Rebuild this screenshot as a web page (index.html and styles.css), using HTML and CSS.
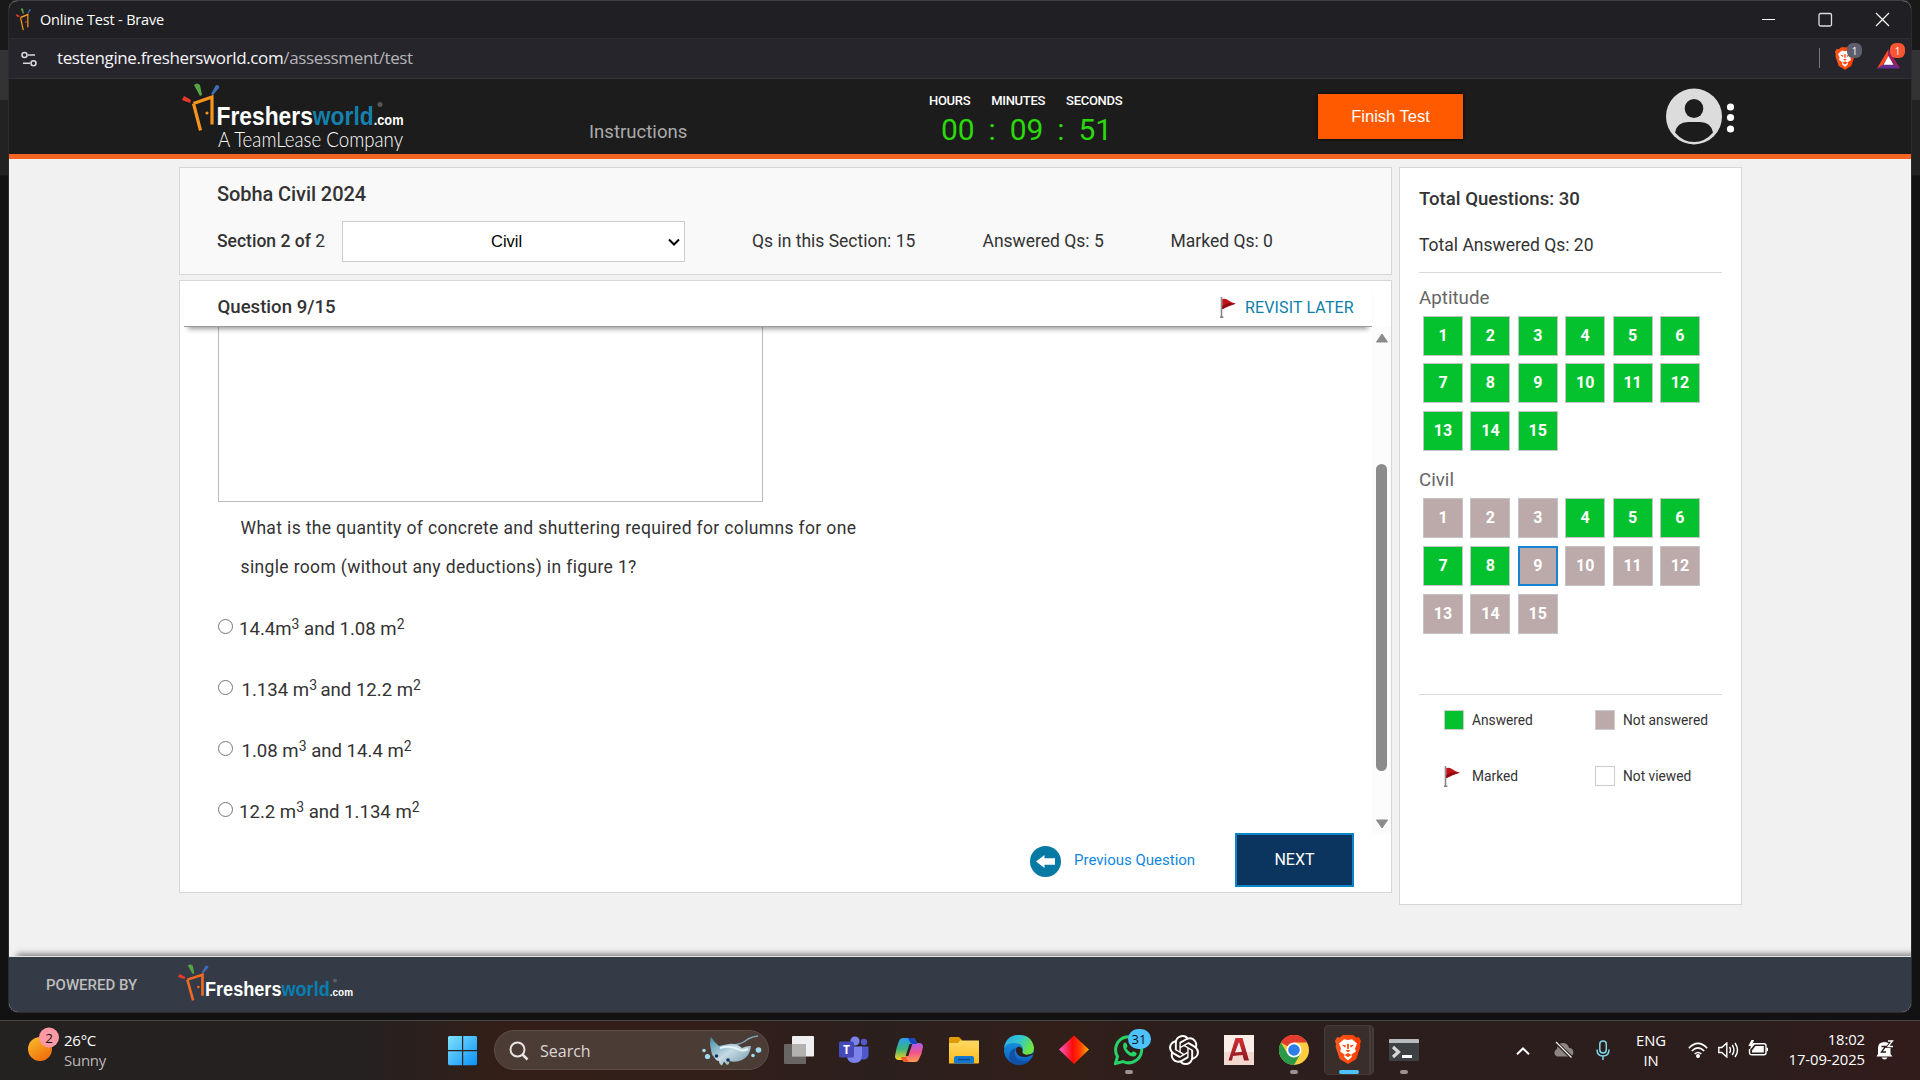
FILE: index.html
```html
<!DOCTYPE html>
<html lang="en">
<head>
<meta charset="utf-8">
<title>Online Test - Brave</title>
<link rel="stylesheet" href="styles.css">
</head>
<body>
<svg class="defs" width="0" height="0" aria-hidden="true">
  <defs>
    <linearGradient id="gBrave" x1="0" y1="0" x2="1" y2="0"><stop offset="0" stop-color="#ff5a1f"/><stop offset="1" stop-color="#ff3a00"/></linearGradient>
    <linearGradient id="gSun" x1="0" y1="0" x2=".7" y2="1"><stop offset="0" stop-color="#fbc02d"/><stop offset="1" stop-color="#ef6c0c"/></linearGradient>
    <linearGradient id="gWin" x1="0" y1="0" x2="1" y2="1"><stop offset="0" stop-color="#7fe3ff"/><stop offset="1" stop-color="#0a90f5"/></linearGradient>
    <linearGradient id="gRay" x1="0" y1="0" x2="1" y2="1"><stop offset="0" stop-color="#3f8aa8"/><stop offset=".5" stop-color="#c5dbe4"/><stop offset="1" stop-color="#6d93a8"/></linearGradient>
    <linearGradient id="gCopA" x1="0" y1="0" x2="0" y2="1"><stop offset="0" stop-color="#2a9df4"/><stop offset=".5" stop-color="#39b57c"/><stop offset="1" stop-color="#ffd21c"/></linearGradient>
    <linearGradient id="gCopB" x1="0" y1="0" x2="0" y2="1"><stop offset="0" stop-color="#a95df0"/><stop offset=".5" stop-color="#f0548e"/><stop offset="1" stop-color="#ff9d4d"/></linearGradient>
    <linearGradient id="gFold" x1="0" y1="0" x2="0" y2="1"><stop offset="0" stop-color="#ffd964"/><stop offset="1" stop-color="#fbbc1c"/></linearGradient>
    <linearGradient id="gEdgeA" x1="0" y1="0" x2="1" y2=".4"><stop offset="0" stop-color="#2aa8e8"/><stop offset=".55" stop-color="#35c6cf"/><stop offset="1" stop-color="#6ee63f"/></linearGradient>
    <linearGradient id="gEdgeB" x1="0" y1="0" x2="0" y2="1"><stop offset="0" stop-color="#1b9de2"/><stop offset="1" stop-color="#0b5cc0"/></linearGradient>
    <linearGradient id="gDia" x1="0" y1="0" x2="1" y2="0"><stop offset="0" stop-color="#ff5fd0"/><stop offset=".45" stop-color="#ff0a0a"/><stop offset=".7" stop-color="#ff3b00"/><stop offset="1" stop-color="#ffb400"/></linearGradient>
    <linearGradient id="gCad" x1="0" y1="0" x2="0" y2="1"><stop offset="0" stop-color="#d32f35"/><stop offset="1" stop-color="#8f1a22"/></linearGradient>
    <symbol id="door" viewBox="0 0 38 60" preserveAspectRatio="none">
      <path d="M0 17l2-4 7 4-1 3z" fill="#e8392b"/>
      <path d="M12 2q3-3 6 0l2 10-2 1z" fill="#55a546"/>
      <path d="M34 2q4 0 3 3l-6 7-2-1z" fill="#3f6db5"/>
      <path d="M11.500 20.500L30 14L30 41.500M11.500 20.500L18.500 47.500" fill="none" stroke="currentColor" stroke-width="3.200"/>
      <circle cx="25" cy="30" r="1.600" fill="currentColor"/>
    </symbol>
    <symbol id="flag" viewBox="0 0 17 21">
      <path d="M1.500 0v20" stroke="#8a8a8a" stroke-width="1.600"/><path d="M0 20.200h3.400" stroke="#777" stroke-width="1.400"/>
      <path d="M2.300 2q4-1 6 1.200q3 2 7.500 3.500q-4 1-7 2.500l-6.500 3z" fill="#c2121c"/><path d="M2.300 9l6-3 7 .8-7 2.300-6 3z" fill="#8d0b12"/>
    </symbol>
    <symbol id="lion" viewBox="0 0 26 29">
      <path d="M8 0h10l3 2.500 3-.3L26 6l-1 3 .3 3-4 12-8.300 5L4.700 24l-4-12L1 9 0 6l2-3.800 3 .3z" fill="url(#gBrave)"/>
      <path d="M13 5l4-.8 5 4.300-2 5 .8 3-4.300 3 .3 2.500L13 25.500 9.200 22l.3-2.500-4.300-3 .8-3-2-5 5-4.300z" fill="#fff"/>
      <path d="M6.500 9.500l4.500 1-.8 2.200zM19.500 9.500l-4.500 1 .8 2.200zM12 9h2l-.2 5h-1.600zM10.500 15h5L13 17.500zM9.500 20l3.500-2 3.500 2-3.500 2.200z" fill="#ff4a10"/>
    </symbol>
  </defs>
</svg>

<div class="window">
  <div class="titlebar">
    <svg class="favicon" width="15" height="28" viewBox="0 0 38 60" preserveAspectRatio="none"><use href="#door" width="38" height="60"/></svg>
    <span class="win-title">Online Test - Brave</span>
    <svg class="win-ctl" width="128" height="18" viewBox="0 0 128 18" fill="none" stroke="#fff">
      <path d="M0 9.500h13"/><rect x="57" y="3.500" width="12.500" height="12.500" rx="1.500" stroke="#ddd" stroke-width="1.300"/><path d="M114 3l13 13M127 3l-13 13" stroke-width="1.200"/>
    </svg>
  </div>
  <div class="urlbar">
    <svg width="16" height="16" viewBox="0 0 16 16" fill="none" stroke="#d8d8dc" stroke-width="1.600"><circle cx="3.500" cy="4" r="2.500"/><path d="M7 4h7M2 12.200h7"/><circle cx="12.500" cy="12.200" r="2.500"/></svg>
    <span class="url"><b>testengine.freshersworld.com</b>/assessment/test</span>
    <span class="url-sep"></span>
    <span class="ext ext-shield"><svg width="20" height="23"><use href="#lion" width="20" height="23"/></svg><i class="badge grey">1</i></span>
    <span class="ext ext-bat"><svg width="23" height="20" viewBox="0 0 23 20"><path d="M11.500 0v8L5 17l-5 2.500z" fill="#ff4724"/><path d="M11.500 0v8L18 17l5 2.500z" fill="#9e1f63"/><path d="M0 19.500L7 15h9l7 4.500z" fill="#662d91"/><path d="M11.500 7l5 8.700h-10z" fill="#fff"/></svg><i class="badge red">1</i></span>
  </div>

  <header class="site-head">
    <svg class="logo" width="230" height="72" viewBox="0 0 230 72">
      <use href="#door" x="0" y="1" width="38" height="60" color="#f7941d"/>
      <text x="34.500" y="43" font-family="Liberation Sans, sans-serif" font-weight="bold" font-size="25" fill="#fff" textLength="187" lengthAdjust="spacingAndGlyphs">Freshers<tspan fill="#1680ad">world</tspan><tspan font-size="14">.com</tspan></text>
      <circle cx="198" cy="22.500" r="2.500" fill="#555"/>
      <text x="36" y="65" font-family="Lato, sans-serif" font-weight="300" font-size="21.500" fill="#fff" textLength="185" lengthAdjust="spacingAndGlyphs">A TeamLease Company</text>
    </svg>
    <a class="instructions">Instructions</a>
    <div class="timer">
      <div class="timer-labels"><span>HOURS</span><span>MINUTES</span><span>SECONDS</span></div>
      <div class="timer-digits"><span>00</span><span>:</span><span>09</span><span>:</span><span>51</span></div>
    </div>
    <div class="finish"><span>Finish Test</span></div>
    <svg class="avatar" width="70" height="57" viewBox="0 0 70 57">
      <circle cx="28" cy="28.500" r="28" fill="#dcdcdc"/><ellipse cx="28" cy="20.500" rx="9.300" ry="9.500" fill="#1c1c1c"/>
      <path d="M9 44.500Q11 34 22 34h12q11 0 13 10.500Q39 54 28 54T9 44.500z" fill="#1c1c1c"/>
      <g fill="#fff"><circle cx="64.500" cy="19" r="3.600"/><circle cx="64.500" cy="29.500" r="3.600"/><circle cx="64.500" cy="41" r="3.600"/></g>
    </svg>
  </header>

  <main class="page">
    <div class="left">
      <section class="card summary">
        <h1>Sobha Civil 2024</h1>
        <div class="summary-row">
          <span class="sec"><b>Section 2 of</b> 2</span>
          <div class="select"><span>Civil</span><svg width="12" height="8" viewBox="0 0 12 8"><path d="M1 1.500l5 5 5-5" fill="none" stroke="#000" stroke-width="2"/></svg></div>
          <span class="st1">Qs in this Section: 15</span>
          <span class="st2">Answered Qs: 5</span>
          <span class="st3">Marked Qs: 0</span>
        </div>
      </section>
      <section class="card question">
        <div class="q-head">
          <h2>Question 9/15</h2>
          <svg class="q-flag" width="17" height="21"><use href="#flag" width="17" height="21"/></svg>
          <a>REVISIT LATER</a>
        </div>
        <div class="q-scroll">
          <div class="q-body">
            <div class="figure"></div>
            <p>What is the quantity of concrete and shuttering required for columns for one<br>single room (without any deductions) in figure 1?</p>
            <ul class="options">
              <li><i class="radio"></i><span class="o1">14.4m<sup>3</sup> and 1.08 m<sup>2</sup></span></li>
              <li><i class="radio"></i><span class="o2">1.134 m<sup>3 </sup>and 12.2 m<sup>2</sup></span></li>
              <li><i class="radio"></i><span class="o2">1.08 m<sup>3</sup> and 14.4 m<sup>2</sup></span></li>
              <li><i class="radio"></i><span class="o1">12.2 m<sup>3</sup> and 1.134 m<sup>2</sup></span></li>
            </ul>
          </div>
          <div class="scrollbar">
            <svg width="14" height="10" viewBox="0 0 14 10"><path d="M7 1L12.500 9h-11z" fill="#8b8b8b" stroke="#8b8b8b" stroke-linejoin="round"/></svg>
            <span class="thumb"></span>
            <svg width="14" height="10" viewBox="0 0 14 10"><path d="M7 9L12.500 1h-11z" fill="#8b8b8b" stroke="#8b8b8b" stroke-linejoin="round"/></svg>
          </div>
        </div>
        <div class="q-nav">
          <svg class="back" width="31" height="31" viewBox="0 0 31 31"><circle cx="15.500" cy="15.500" r="15.500" fill="#0679a4"/><path d="M6 15.500L14.500 9v3.200H25v6.600H14.500v3.200z" fill="#fff"/></svg>
          <a class="prev">Previous Question</a>
          <div class="next"><span>NEXT</span></div>
        </div>
      </section>
    </div>

    <aside class="card panel">
      <h3>Total Questions: 30</h3>
      <div class="answered">Total Answered Qs: 20</div>
      <h4 class="apt">Aptitude</h4>
      <div class="cells"><span>1</span><span>2</span><span>3</span><span>4</span><span>5</span><span>6</span><span>7</span><span>8</span><span>9</span><span>10</span><span>11</span><span>12</span><span>13</span><span>14</span><span>15</span></div>
      <h4 class="civ">Civil</h4>
      <div class="cells civil"><span class="na">1</span><span class="na">2</span><span class="na">3</span><span>4</span><span>5</span><span>6</span><span>7</span><span>8</span><span class="na current">9</span><span class="na">10</span><span class="na">11</span><span class="na">12</span><span class="na">13</span><span class="na">14</span><span class="na">15</span></div>
      <div class="legend">
        <div><i class="sw green"></i><span>Answered</span></div>
        <div><i class="sw taupe"></i><span>Not answered</span></div>
        <div><svg width="20" height="21"><use href="#flag" width="17" height="21"/></svg><span>Marked</span></div>
        <div><i class="sw"></i><span>Not viewed</span></div>
      </div>
    </aside>
  </main>

  <footer class="site-foot">
    <span>POWERED BY</span>
    <svg width="184" height="48" viewBox="0 0 184 48">
      <use href="#door" x="0" y="0" width="31" height="46" color="#f26a21"/>
      <text x="27" y="32" font-family="Liberation Sans, sans-serif" font-weight="bold" font-size="20" fill="#fff" textLength="148" lengthAdjust="spacingAndGlyphs">Freshers<tspan fill="#067fb0">world</tspan><tspan font-size="11">.com</tspan></text>
      <circle cx="157" cy="16.500" r="2" fill="#59606b"/>
    </svg>
  </footer>
</div>

<div class="taskbar">
  <div class="weather">
    <svg width="32" height="34" viewBox="0 0 32 34"><circle cx="12" cy="22" r="12" fill="url(#gSun)"/><circle cx="21" cy="10.500" r="10" fill="#ff9aa5"/><text x="21" y="15.500" text-anchor="middle" font-family="Open Sans, sans-serif" font-size="13.500" fill="#111">2</text></svg>
    <div><span>26°C</span><span class="dim">Sunny</span></div>
  </div>
  <svg class="start" width="30" height="30" viewBox="0 0 30 30" fill="url(#gWin)"><path d="M1 0h13v14H0V1zM15.200 0H28l1 1v13H15.200zM0 15.200h14v14H1l-1-1zM15.200 15.200H29v13l-1 1H15.200z"/></svg>
  <div class="search">
    <svg width="20" height="20" viewBox="0 0 20 20" fill="none" stroke="#e8e4e2" stroke-width="2"><circle cx="8.500" cy="8.500" r="7"/><path d="M13.500 13.500l5 5" stroke-width="2.500"/></svg>
    <span>Search</span>
    <svg class="ray" width="60" height="32" viewBox="0 0 60 32">
      <path d="M32 10Q40 9 46 4Q51 1.200 56 1" fill="none" stroke="#7fa7b8" stroke-width="1.600"/>
      <path d="M9 2Q7 9 9 14Q9 19 12 22Q14 26 17 26Q17 29 20 30.500L22 26.500L25 30Q28 29 27 26Q34 28 40 25Q48 21 49 11Q44 11 40 13Q34 8 27 9Q21 10 17 11Q12 7 9 2z" fill="url(#gRay)"/>
      <path d="M18 13Q28 10 36 14Q40 17 46 14" stroke="#e6f3f7" fill="none" stroke-width="2"/><circle cx="14.500" cy="21" r="1.800" fill="#16325c"/><circle cx="26" cy="25" r="1.800" fill="#16325c"/>
      <g fill="#9fdcf0"><circle cx="2" cy="15.500" r="1.800"/><circle cx="5.500" cy="21.500" r="2.600"/><circle cx="51" cy="20.500" r="1.800"/><circle cx="56.500" cy="15" r="2.800"/></g>
    </svg>
  </div>
  <div class="apps">
    <div><svg width="30" height="30" viewBox="0 0 30 30"><rect x="8" y="1" width="22" height="20.500" rx="1" fill="#efefef"/><rect y="9" width="22" height="20" rx="1" fill="#777" opacity=".8"/><rect x="8" y="9" width="14" height="12.500" fill="#b4b2b0"/></svg></div>
    <div><svg width="30" height="30" viewBox="0 0 30 30"><circle cx="16" cy="6" r="4.600" fill="#7b83eb"/><circle cx="25" cy="7" r="3.200" fill="#5059c9"/><path d="M20 11.500h9.500v8q0 5-5 5H20z" fill="#5059c9"/><path d="M8 11.500h15V20q0 8-7.500 8T8 20z" fill="#7b83eb"/><rect y="6.500" width="15" height="16" rx="1.500" fill="#454ab8"/><text x="7.500" y="19" text-anchor="middle" font-family="Open Sans, sans-serif" font-size="12" font-weight="bold" fill="#fff">T</text></svg></div>
    <div><svg width="30" height="30" viewBox="0 0 30 30"><path d="M9 3h9q3 0 4 3l1 3h-6L12 22q-1 3-4 3H5q-4 0-4-4Q2 13 5 6q1-3 4-3z" fill="url(#gCopA)"/><path d="M21 27h-9q-3 0-4-3l-1-2h5L17.500 9q1-1 4-1H25q4 0 4 4Q28 19 25 24q-1 3-4 3z" fill="url(#gCopB)"/><path d="M14 3h4q3 0 4 3l1 3h-4q-2 0-3-2z" fill="#1746c4"/><path d="M7 22h5q1 3 3 5h-3q-3 0-4-2z" fill="#f4572e"/><path d="M15.500 9h2.800l-4 12h-2.600z" fill="#2c1e1b"/></svg></div>
    <div><svg width="30" height="30" viewBox="0 0 30 30"><path d="M1 2h9l3 3v4H0V3z" fill="#e09c07"/><path d="M11 5.500h19v22q0 1-1 1H0V8h9z" fill="url(#gFold)"/><path d="M5 28.500V23q0-2 2-2h16q2 0 2 2v5.500z" fill="#1579cf"/><path d="M9 24.500h12" stroke="#0a4c8f" stroke-width="1.500"/></svg></div>
    <div><svg width="30" height="30" viewBox="0 0 30 30"><circle cx="15" cy="15" r="15" fill="url(#gEdgeB)"/><path d="M0 13Q2 0 15 0Q28 0 30 13Q30 20 22 20Q17 19 19 15Q19 8 10 8Q3 8 0 13z" fill="url(#gEdgeA)"/><path d="M12 13q-4 7 3 12 6 3 12-1-4 6-12 6-9-1-10-8 1-8 7-9z" fill="#1150a4"/><path d="M15 11.500q-4 1-3 5 2 6 10 5.500 4-.5 8-3v-1q-5 2.500-9 1.500-3.500-1-2.500-4 0-3-3.500-4z" fill="#2c1f1c"/></svg></div>
    <div><svg width="30" height="30" viewBox="0 0 30 30"><path d="M15 .5L30 14.500 15 29 0 14.500z" fill="url(#gDia)"/></svg></div>
    <div class="run"><svg width="30" height="30" viewBox="0 0 30 30"><path d="M1.500 28.500l2-7A13 13 0 1 1 9 26.500z" fill="none" stroke="#25d366" stroke-width="3"/><path d="M9.500 8.500q2-2 3 0l1 2.500q0 1-1.200 2.200 2 3.500 5 4.800l1.700-1.800q1 0 3.500 1.600.5 3-2.500 3.700-4 .5-8-4t-2.500-9z" fill="#25d366"/></svg><b class="count">31</b></div>
    <div><svg width="30" height="30" viewBox="0 0 24 24" fill="#fff"><path d="M22.2819 9.8211a5.9847 5.9847 0 0 0-.5157-4.9108 6.0462 6.0462 0 0 0-6.5098-2.9A6.0651 6.0651 0 0 0 4.9807 4.1818a5.9847 5.9847 0 0 0-3.9977 2.9 6.0462 6.0462 0 0 0 .7427 7.0966 5.98 5.98 0 0 0 .511 4.9107 6.051 6.051 0 0 0 6.5146 2.9001A5.9847 5.9847 0 0 0 13.2599 24a6.0557 6.0557 0 0 0 5.7718-4.2058 5.9894 5.9894 0 0 0 3.9977-2.9001 6.0557 6.0557 0 0 0-.7475-7.0729zm-9.022 12.6081a4.4755 4.4755 0 0 1-2.8764-1.0408l.1419-.0804 4.7783-2.7582a.7948.7948 0 0 0 .3927-.6813v-6.7369l2.02 1.1686a.071.071 0 0 1 .038.052v5.5826a4.504 4.504 0 0 1-4.4945 4.4944zm-9.6607-4.1254a4.4708 4.4708 0 0 1-.5346-3.0137l.142.0852 4.783 2.7582a.7712.7712 0 0 0 .7806 0l5.8428-3.3685v2.3324a.0804.0804 0 0 1-.0332.0615L9.74 19.9502a4.4992 4.4992 0 0 1-6.1408-1.6464zM2.3408 7.8956a4.485 4.485 0 0 1 2.3655-1.9728V11.6a.7664.7664 0 0 0 .3879.6765l5.8144 3.3543-2.0201 1.1685a.0757.0757 0 0 1-.071 0l-4.8303-2.7865A4.504 4.504 0 0 1 2.3408 7.872zm16.5963 3.8558L13.1038 8.364 15.1192 7.2a.0757.0757 0 0 1 .071 0l4.8303 2.7913a4.4944 4.4944 0 0 1-.6765 8.1042v-5.6772a.79.79 0 0 0-.407-.667zm2.0107-3.0231l-.142-.0852-4.7735-2.7818a.7759.7759 0 0 0-.7854 0L9.409 9.2297V6.8974a.0662.0662 0 0 1 .0284-.0615l4.8303-2.7866a4.4992 4.4992 0 0 1 6.6802 4.66zM8.3065 12.863l-2.02-1.1638a.0804.0804 0 0 1-.038-.0567V6.0742a4.4992 4.4992 0 0 1 7.3757-3.4537l-.142.0805L8.704 5.459a.7948.7948 0 0 0-.3927.6813zm1.0976-2.3654l2.602-1.4998 2.6069 1.4998v2.9994l-2.5974 1.4997-2.6067-1.4997Z"/></svg></div>
    <div><svg width="30" height="30" viewBox="0 0 30 30"><rect width="30" height="30" fill="#fbeee9"/><path d="M0 17h30v13H0z" fill="#f3d8cf"/><path d="M11.500 3h7L25 25.500h-5L18.500 20l-9.500 1-1 4.500H4.500zM15 7l-4 10.500 7-.8z" fill="url(#gCad)" fill-rule="evenodd"/></svg></div>
    <div class="run"><svg width="30" height="30" viewBox="0 0 30 30"><circle cx="15" cy="15" r="15" fill="#ffcd40"/><path d="M15 15L2 7.500A15 15 0 0 1 28 7.500H15z" fill="#e33b2e"/><path d="M2 7.500A15 15 0 0 0 15 30l6.500-11.200L15 15 8.500 18.700z" fill="#2a9a4a"/><circle cx="15" cy="15" r="7.500" fill="#fff"/><circle cx="15" cy="15" r="5.800" fill="#2f7de9"/></svg></div>
    <div class="active"><svg width="26" height="30"><use href="#lion" width="26" height="29"/></svg></div>
    <div class="run"><svg width="30" height="30" viewBox="0 0 30 30"><rect y="4" width="30" height="22" rx="1" fill="#3e4143"/><path d="M0 8V5q0-1 1-1h28q1 0 1 1v3z" fill="#b9bbbd"/><path d="M4 12l5.500 5L4 22" stroke="#d6d6d6" stroke-width="3.200" fill="none"/><path d="M13 21.500h10" stroke="#fff" stroke-width="3"/></svg></div>
  </div>
  <div class="tray">
    <svg width="14" height="8" viewBox="0 0 14 8"><path d="M1 7.200L7 1.500l6 5.700" fill="none" stroke="#fff" stroke-width="2"/></svg>
    <svg class="cloud" width="21" height="18" viewBox="0 0 21 18"><path d="M4 15.500a4 4 0 0 1 0-7.500 6 5.500 0 0 1 12-1 4.300 4.300 0 0 1 1 8.500z" fill="#8d8583"/><path d="M3 1.500l15.500 15" stroke="#2c1e1b" stroke-width="3.500"/><path d="M3 1l15.500 15.500" stroke="#eee" stroke-width="1.300"/></svg>
    <svg class="mic" width="14" height="21" viewBox="0 0 14 21" fill="none" stroke="#7fd6ea" stroke-width="1.500"><rect x="3.800" y="1" width="6.500" height="12" rx="3.200"/><path d="M1 9.500q0 6.500 6 6.500t6-6.500M7 16v4"/></svg>
    <div class="lang"><span>ENG</span><span>IN</span></div>
    <svg class="wifi" width="20" height="16" viewBox="0 0 20 16" fill="none" stroke="#fff" stroke-width="1.600"><path d="M.8 6.200Q10-3.500 19.200 6.200M3.800 9Q10 2.800 16.200 9M6.700 12Q10 9 13.300 12"/><circle cx="10" cy="14" r="1.200" fill="#fff"/></svg>
    <svg class="vol" width="21" height="16" viewBox="0 0 21 16" fill="none" stroke="#fff" stroke-width="1.400"><path d="M.8 5.500h3L8.800 1v14L3.800 10.500h-3zM11.500 5q2 3 0 6M14.200 3q3.500 5 0 10M17 1q5 7 0 14"/></svg>
    <svg class="batt" width="21" height="17" viewBox="0 0 21 17"><path d="M5 3.800h11q2 0 2 2v7q0 2-2 2H4q-2.500 0-2.500-2V9" fill="none" stroke="#fff" stroke-width="1.400"/><path d="M7.500 6h8.300v6.500H4V10.500z" fill="#fff"/><path d="M18.500 7.500l1.500.5v3l-1.500.5z" fill="#fff"/><path d="M3.500 0L.3 6h2.500L2 10 7 4H4.500L6 0z" fill="#fff"/></svg>
    <div class="clock"><span>18:02</span><span>17-09-2025</span></div>
    <svg class="bell" width="19" height="20" viewBox="0 0 19 20"><path d="M2 14V8q0-6 6.500-6 6 0 6 6v6l2 2.500H.5z" fill="#fff"/><path d="M5.500 17.500h6q-1 2-3 2t-3-2z" fill="#fff"/><path d="M5.500 6.500h4l-4 5.500h4.500" stroke="#2d1c1b" fill="none" stroke-width="1.400"/><path d="M12 1h4.500L12 6.500h5" stroke="#2d1c1b" stroke-width="3" fill="none"/><path d="M12 1h4.500L12 6.500h5" stroke="#fff" stroke-width="1.300" fill="none"/></svg>
  </div>
</div>
</body>
</html>
```
FILE: styles.css
```css
* { box-sizing: border-box; }
html, body { margin: 0; height: 1080px; overflow: hidden; }
body {
  font-family: Roboto, "Liberation Sans", sans-serif;
  color: #333;
  background: linear-gradient(#191919 0 50px, #333335 50px 100px, #222 100px 175px, #121212 176px);
}
h1, h2, h3, h4, p, ul { margin: 0; padding: 0; list-style: none; font-weight: 500; }
svg { display: block; flex: none; }
i { font-style: normal; }
.defs { position: absolute; }
b { font-weight: 500; }
span, a { white-space: nowrap; }

.window {
  margin: 0 9px 8px;
  height: 1012px;
  border-top: 1px solid #414144;
  border-radius: 9px;
  overflow: hidden;
  background: #f1f1f1;
  box-shadow: 0 0 0 1px #2c2c2e;
}
.titlebar { display: flex; height: 37px; background: #201f24; padding-left: 7px; }
.favicon { margin-top: 7px; color: #f7941d; }
.win-title { margin-left: 9px; font: 14.500px/38px "Open Sans", sans-serif; color: #fff; letter-spacing: -.18px; }
.win-ctl { margin: 9px 21px 0 auto; }
.urlbar { display: flex; height: 41px; background: #26252b; border-top: 1px solid #2d2c31; border-bottom: 1px solid #343338; padding-left: 12px; }
.urlbar > svg { margin-top: 12px; }
.url { margin-left: 20px; font: 17px/38px "Open Sans", sans-serif; color: #b4b4b8; letter-spacing: -.37px; }
.url b { font-weight: 400; color: #f4f4f6; }
.url-sep { width: 1px; height: 20px; background: #77767c; margin: 9px 15px 0 auto; }
.ext { position: relative; }
.ext-shield { margin: 8px 22px 0 0; }
.ext-bat { margin: 10px 11px 0 0; }
.badge { position: absolute; height: 15px; width: 15px; border-radius: 6px; color: #fff; font: 10px/16px "Open Sans", sans-serif; text-align: center; }
.badge.grey { left: 12px; top: -4px; background: #5d5f6e; }
.badge.red { left: 13px; top: -6px; background: #fb5531; }

.site-head { display: flex; height: 80px; background: #1c1c1c; border-bottom: 5px solid #f26522; padding-left: 173px; }
.logo { margin-top: 3px; }
.instructions { margin: 41px 0 0 177px; width: 98px; font-size: 18.600px; line-height: 24px; color: #aaa; }
.timer { margin: 12px 0 0 242px; width: 196px; }
.timer-labels { display: flex; gap: 21px; font-size: 13px; line-height: 20px; font-weight: 500; color: #fff; letter-spacing: -.3px; }
.timer-digits { display: flex; padding-left: 12px; font-size: 30px; line-height: 38px; color: #2bd90b; }
.timer-digits span:nth-child(even) { width: 35px; text-align: center; }
.finish { margin: 15px 0 0 193px; width: 145px; height: 45px; background: #ff5a00; box-shadow: 0 0 3px #000; color: #fff; text-align: center; font: 16.500px/44px "Liberation Sans", sans-serif; }
.avatar { margin: 9px 0 0 203px; }

.page { display: flex; gap: 7px; align-items: flex-start; height: 797px; padding: 8px 0 0 170px; }
.left { width: 1213px; }
.card { border: 1px solid #d6d6d6; background: #fff; }
.summary { height: 108px; background: #f9f9f9; padding: 13px 0 0 38px; }
h1 { margin-left: -1px; font-size: 20px; line-height: 26px; letter-spacing: -.08px; }
.summary-row { display: flex; margin-top: 14px; font-size: 17.500px; line-height: 40px; }
.sec { margin-left: -1px; width: 125px; }
.select { display: flex; align-items: center; width: 343px; height: 41px; border: 1px solid #ccc; background: #fff; color: #000; padding: 0 4px 0 148px; font: 16.500px/39px "Liberation Sans", sans-serif; justify-content: space-between; }
.st1 { margin-left: 67px; width: 230.500px; }
.st2 { width: 188px; }

.question { margin-top: 5px; height: 613px; }
.q-head { position: relative; display: flex; height: 46px; margin: 0 19px 0 4px; padding-left: 33.500px; border-bottom: 1px solid #9b9b9b; box-shadow: 0 6px 5px -4px rgba(0,0,0,.4); background: #fff; }
h2 { font-size: 18.600px; line-height: 52px; }
.q-flag { margin: 16px 8px 0 auto; }
.q-head a { width: 127px; font-size: 16px; line-height: 54px; color: #0c7fa9; letter-spacing: .14px; }
.q-scroll { display: flex; height: 507px; }
.q-body { flex: 1; padding-left: 38px; }
.figure { width: 545px; height: 175px; border: 1px solid #bbb; border-top: 0; }
.q-body p { padding: 7px 0 0 22.500px; font-size: 17.500px; line-height: 39px; font-weight: 400; letter-spacing: .355px; }
.options { margin-top: 11px; font-size: 18.600px; font-weight: 400; }
.options li { display: flex; height: 61px; line-height: 62px; }
.radio { width: 15px; height: 15px; margin-top: 21px; border: 1px solid #767676; border-radius: 50%; }
.o1 { margin-left: 6px; }
.o2 { margin-left: 8.500px; }
sup { font-size: 13.950px; line-height: 0; vertical-align: 6px; }
.scrollbar { width: 19px; background: #fcfcfc; display: flex; flex-direction: column; align-items: center; padding: 6px 0 5px; }
.thumb { width: 11px; height: 307px; margin: 121px 0 auto; border-radius: 6px; background: #8b8b8b; }
.q-nav { display: flex; padding-left: 850px; height: 57px; }
.back { margin-top: 12px; }
.prev { margin-left: 13px; width: 161px; font-size: 15px; line-height: 53px; color: #1187df; }
.next { width: 119px; height: 54px; margin-top: -1px; border: 2px solid #0d83c9; background: #0b355e; color: #fff; font-size: 16px; line-height: 50px; text-align: center; }

.panel { width: 343px; height: 738px; padding: 0 19px; }
h3 { margin-top: 18px; font-size: 18.600px; line-height: 26px; }
.answered { margin-top: 20px; height: 41px; font-size: 17.500px; line-height: 26px; border-bottom: 1px solid #d9d9d9; }
h4 { font-size: 18.750px; line-height: 26px; font-weight: 400; color: #666; }
.apt { margin-top: 12px; }
.cells { display: grid; grid-template-columns: repeat(6, 40px); gap: 7.400px; margin: 5px 0 0 4px; }
.cells span { height: 40px; border: 1px solid #c4c4c4; background: #04c22e; color: #fff; font-size: 16px; font-weight: 700; line-height: 37px; text-align: center; }
.cells .na { background: #bbaaa9; }
.cells .current { border: 2px solid #1583d8; line-height: 36px; }
.civil { row-gap: 8px; }
.civ { margin-top: 16.200px; }
.legend { display: grid; grid-template-columns: 151px 1fr; grid-auto-rows: 21px; row-gap: 35px; margin-top: 60px; padding: 15px 0 0 25px; border-top: 1px solid #d9d9d9; font-size: 13.750px; line-height: 21px; }
.legend div { display: flex; gap: 8px; }
.sw { width: 20px; height: 20px; border: 1px solid #ccc; }
.green { background: #04c22e; }
.taupe { background: #bbaaa9; }

.site-foot { position: relative; display: flex; height: 56px; border-top: 1px solid #e4e4e4; background: #353b46; padding: 7px 0 0 37px; color: #bdbdbd; font-size: 15px; font-weight: 500; line-height: 42px; box-shadow: 8px -2px 6px rgba(0,0,0,.5); }
.site-foot svg { margin-left: 41px; }

.taskbar { position: relative; display: flex; height: 60px; border-top: 1px solid #4b4543; background: linear-gradient(90deg, #242221 0, #252120 370px, #331f18 500px, #321f19 720px, #2b1f1d 880px, #321f19 1060px, #2b1e1c 1180px, #2b1e1c 1750px, #321b1b 1910px); font-family: "Open Sans", sans-serif; color: #fff; }
.weather { display: flex; width: 448px; padding: 6px 0 0 28px; font-size: 15px; letter-spacing: -.25px; }
.weather div { display: flex; flex-direction: column; margin: 3px 0 0 4px; line-height: 20px; }
.dim { color: #bcb8b7; }
.start { margin-top: 15px; }
.search { display: flex; margin: 9px 0 0 16px; width: 275px; height: 40px; border-radius: 20px; background: #4c3c36; border: 1px solid #5d4e49; padding-left: 14px; }
.search > svg { margin-top: 10px; }
.search span { margin-left: 11px; font-size: 16px; line-height: 40px; color: #ddd6d3; }
.search .ray { margin: 4px 6px 0 auto; }
.apps { display: flex; margin-left: 2px; }
.apps div { position: relative; width: 50px; height: 50px; margin: 4px 2.500px 0; padding-top: 10px; display: flex; justify-content: center; align-items: flex-start; }
.apps .run::after { content: ""; position: absolute; left: 21px; top: 45px; width: 8px; height: 4px; border-radius: 2px; background: #9b9291; }
.apps .active { background: #3a2e2b; border: 1px solid #483c39; border-radius: 5px; border-right: 5px double #483c39; padding-left: 3px; padding-top: 9px; }
.apps .active::after { content: ""; position: absolute; left: 14px; top: 44px; width: 20px; height: 4px; border-radius: 2px; background: #4cc2ff; }
.count { position: absolute; left: 24px; top: 4px; width: 23px; height: 20px; border-radius: 10px; background: #4cc2ff; color: #111; font-size: 13px; line-height: 20px; font-weight: 400; text-align: center; }
.tray { display: flex; margin-left: auto; padding-right: 25px; font-size: 14.800px; letter-spacing: -.08px; }
.tray > svg:first-child { margin-top: 26px; }
.tray .cloud { margin: 20px 0 0 23px; }
.tray .mic { margin: 19px 0 0 22px; }
.lang { display: flex; flex-direction: column; align-items: center; width: 30px; margin: 9px 0 0 26px; line-height: 20px; }
.tray .wifi { margin: 21px 0 0 22px; }
.tray .vol { margin: 21px 0 0 10px; }
.tray .batt { margin: 19px 0 0 9px; }
.clock { display: flex; flex-direction: column; align-items: flex-end; width: 96px; margin: 8px 0 0; line-height: 20px; }
.tray .bell { margin: 19px 0 0 11px; }
```
